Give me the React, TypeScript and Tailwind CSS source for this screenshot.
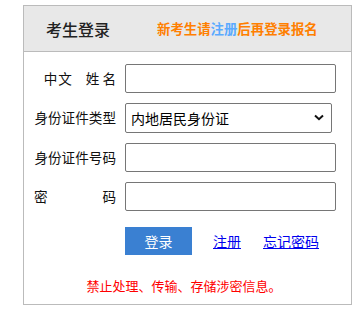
import React, { useState } from "react";

const cjk = { fontFamily: '"Noto Sans CJK SC", "Noto Sans", sans-serif' };

const Field = ({ label, children }: { label: React.ReactNode; children: React.ReactNode }) => (
  <div className="flex items-center gap-[9px]">
    <div className="w-[82px] shrink-0 whitespace-nowrap text-right text-[13.6px] leading-none text-[#111]">
      {label}
    </div>
    {children}
  </div>
);

const App = () => {
  const [idType, setIdType] = useState("内地居民身份证");

  return (
    <div className="min-h-[315px] bg-white pt-[5px]" style={cjk}>
      <div className="ml-[23px] w-[329px] h-[300px] border border-[#bbbbbb]">
        <div className="h-[46px] bg-[#e8e8e8] border-b border-[#bbbbbb] flex items-center pl-[22px]">
          <span className="text-[16px] text-[#222] font-medium">考生登录</span>
          <span className="ml-[47px] text-[13.4px] font-bold text-[#ff7f00]">
            新考生请<a href="#" className="text-[#5aaaff]">注册</a>后再登录报名
          </span>
        </div>

        <form className="pt-[12px] pl-[10px]" onSubmit={(e) => e.preventDefault()}>
          <div className="flex flex-col gap-[10px]">
            <Field
              label={
                <span className="inline-flex gap-[13px] pl-[7px]">
                  <span className="tracking-[1px]">中文</span>
                  <span className="tracking-[3px] -mr-[3px]">姓名</span>
                </span>
              }
            >
              <input className="w-[211px] h-[29px] border border-[#767676] rounded-[2px] px-2 text-[14px] outline-none" />
            </Field>
            <Field label="身份证件类型">
              <div className="relative">
                <select
                  value={idType}
                  onChange={(e) => setIdType(e.target.value)}
                  className="appearance-none w-[207px] h-[30px] border border-[#767676] rounded-[2px] pl-[5px] text-[14px] text-black outline-none"
                >
                  <option>内地居民身份证</option>
                  <option>港澳居民来往内地通行证</option>
                  <option>台湾居民来往大陆通行证</option>
                  <option>护照</option>
                </select>
                <svg
                  className="absolute right-[8px] top-[11px] pointer-events-none"
                  width="10"
                  height="7"
                  viewBox="0 0 10 7"
                >
                  <path d="M1 1.5 L5 5.2 L9 1.5" fill="none" stroke="#111" strokeWidth="2" />
                </svg>
              </div>
            </Field>
            <Field label="身份证件号码">
              <input className="w-[211px] h-[29px] border border-[#767676] rounded-[2px] px-2 text-[14px] outline-none" />
            </Field>
            <Field
              label={
                <span className="flex justify-between">
                  <span>密</span>
                  <span>码</span>
                </span>
              }
            >
              <input
                type="password"
                className="w-[211px] h-[29px] border border-[#767676] rounded-[2px] px-2 text-[14px] outline-none"
              />
            </Field>
          </div>

          <div className="flex items-center mt-[16px] ml-[91px]">
            <button
              type="submit"
              className="w-[67px] h-[28px] bg-[#3a80d2] text-white text-[14px]"
            >
              登录
            </button>
            <a href="#" className="ml-[21px] text-[14px] text-[#0000ee] underline">
              注册
            </a>
            <a href="#" className="ml-[22px] text-[14px] text-[#0000ee] underline">
              忘记密码
            </a>
          </div>
        </form>

        <p className="mt-[21px] text-center text-[13px] text-[#ff0000] pr-[7px]">
          禁止处理、传输、存储涉密信息。
        </p>
      </div>
    </div>
  );
};

export default App;
